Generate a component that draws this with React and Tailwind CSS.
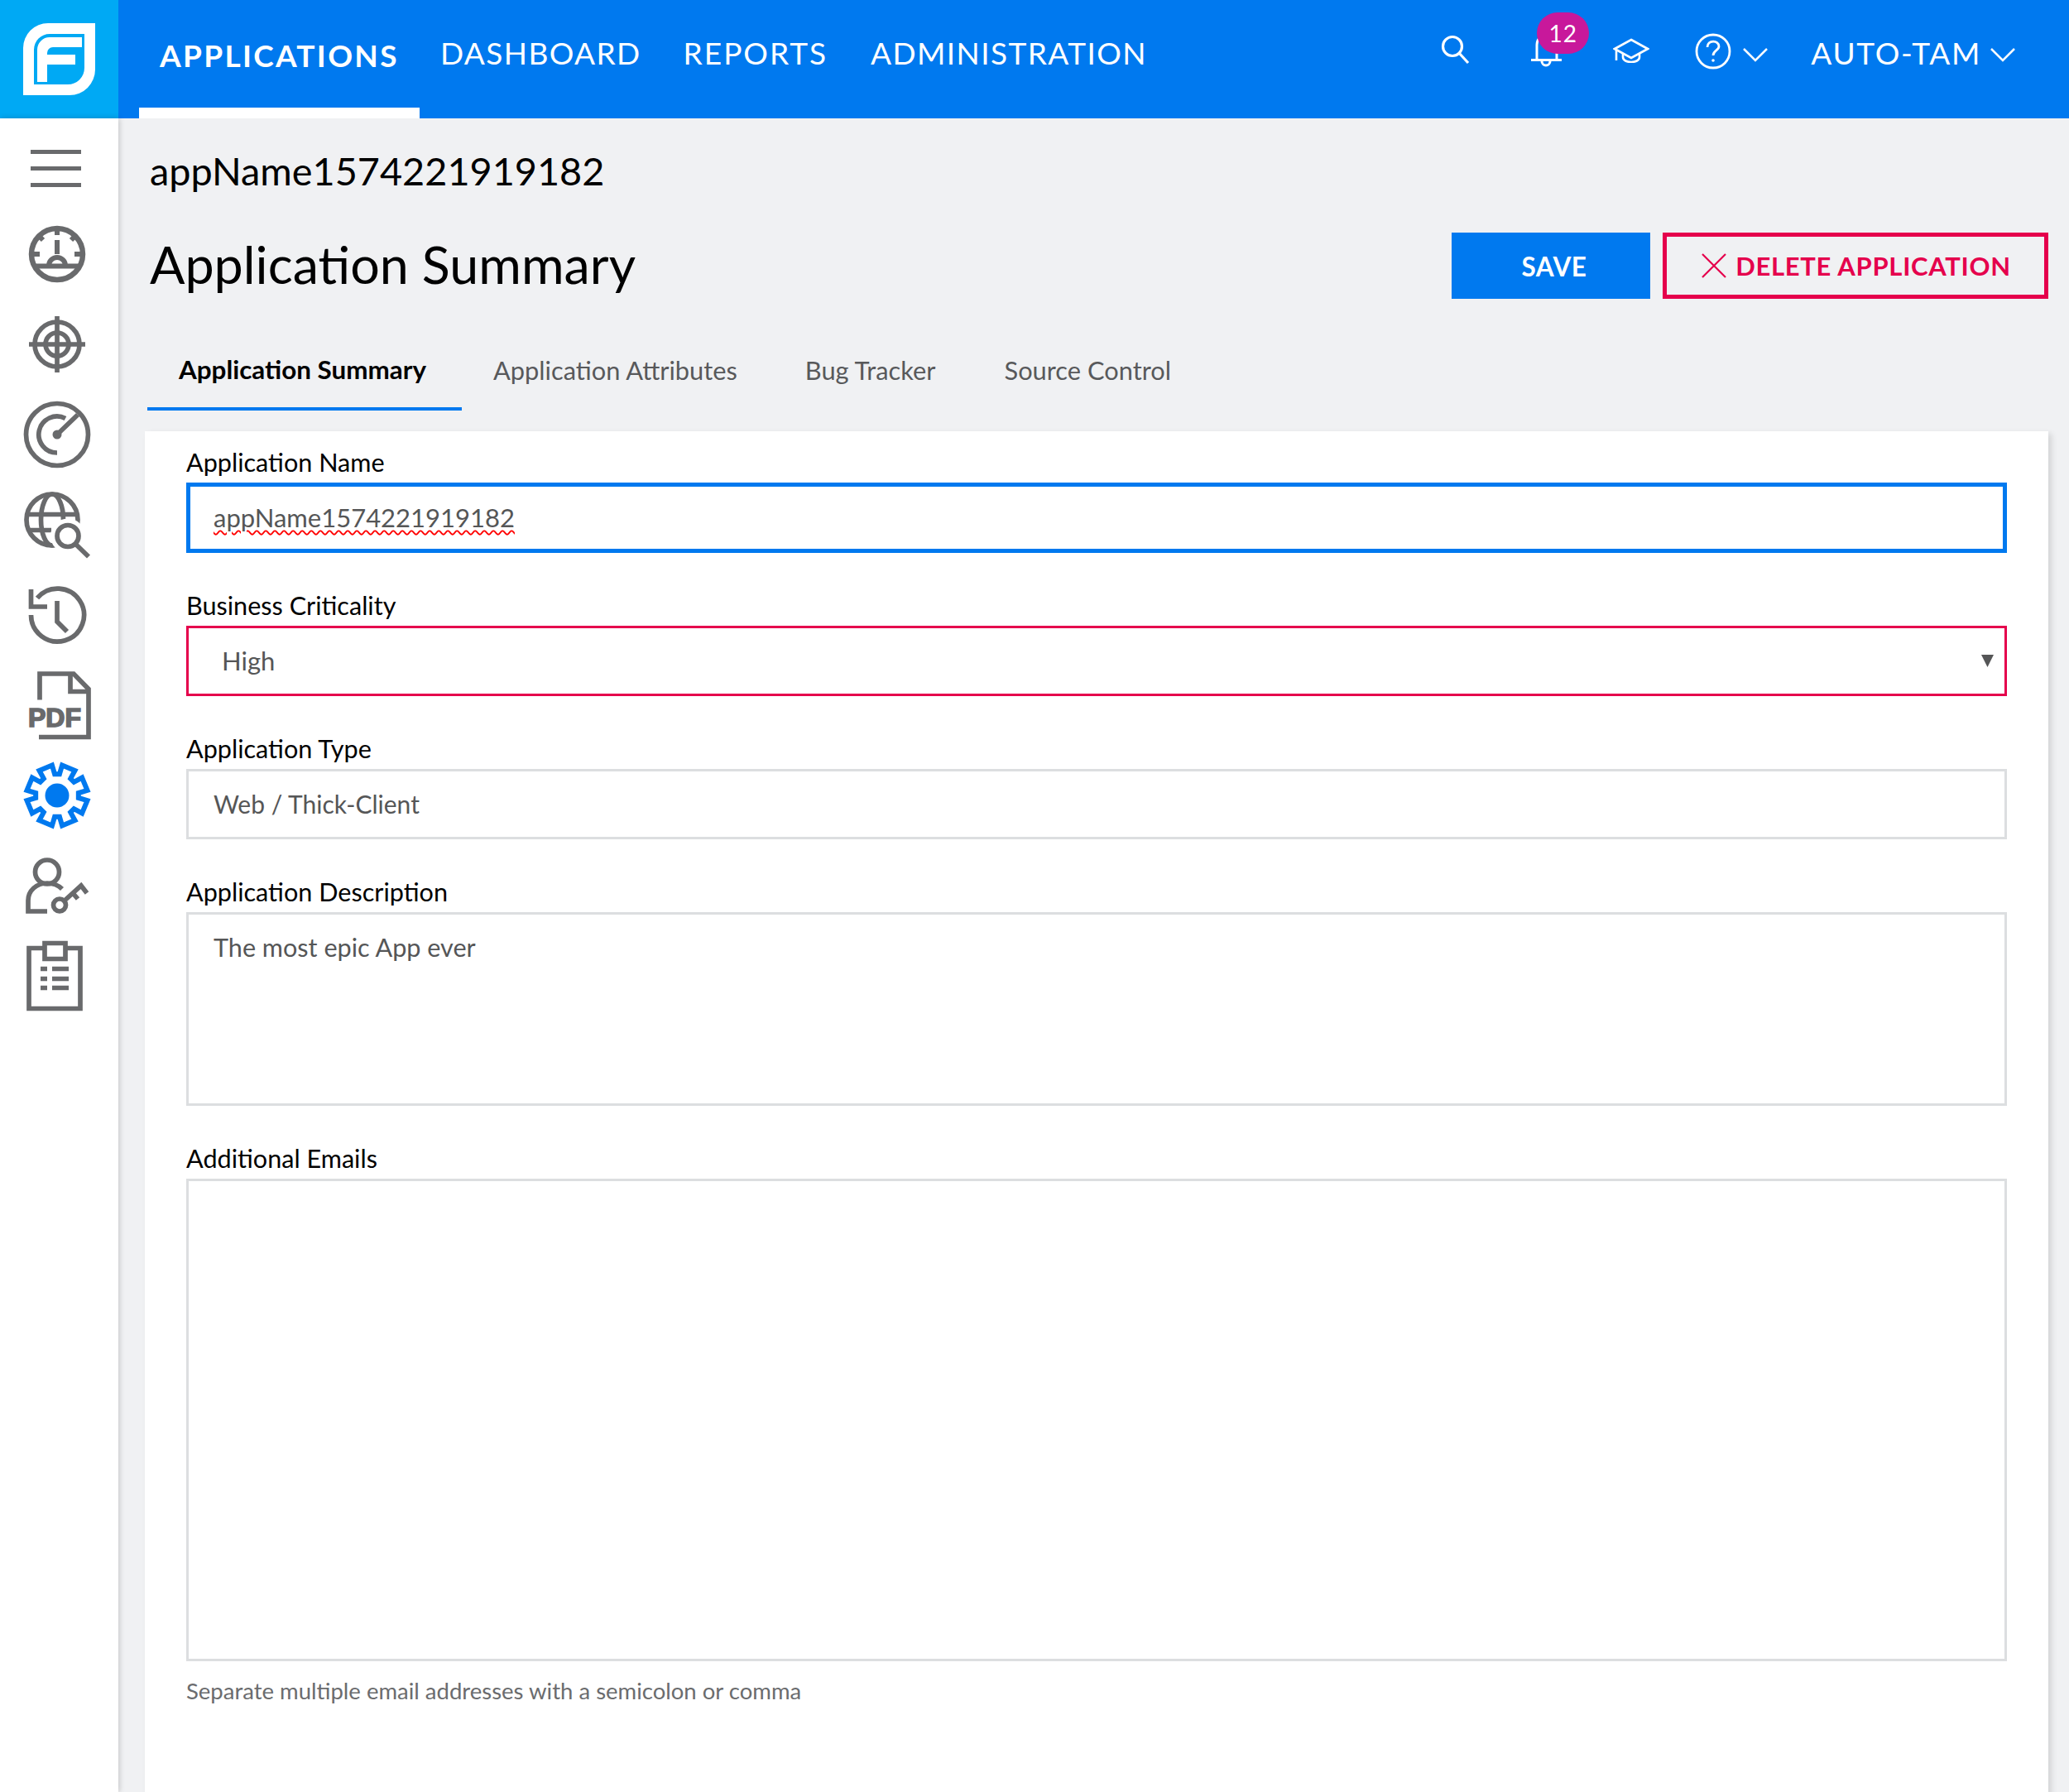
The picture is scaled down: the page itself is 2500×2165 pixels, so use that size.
import React from 'react';

const FONT = "font-['Lato','Noto_Sans',sans-serif]";

const Logo = () => (
  <svg width="143" height="143" viewBox="0 0 143 143">
    <path fill="#fff" fillRule="evenodd" d="M58 28H115V84A31 31 0 0 1 84 115H28V58A30 30 0 0 1 58 28ZM60 41A19 19 0 0 0 41 60V102H82A20 20 0 0 0 102 82V41Z" />
    <path fill="#fff" d="M45 99V60A15 15 0 0 1 60 45H99V57H64A7 7 0 0 0 57 64V66H91V78H57V99Z" />
  </svg>
);

const gearPath = () => {
  const pts = [];
  for (let i = 0; i < 8; i++) {
    const a = 22.5 + i * 45;
    [[a - 16, 26], [a - 13, 37], [a + 13, 37], [a + 16, 26]].forEach(([deg, r]) => {
      const t = ((deg - 90) * Math.PI) / 180;
      pts.push(`${(50 + r * Math.cos(t)).toFixed(2)} ${(50 + r * Math.sin(t)).toFixed(2)}`);
    });
  }
  return `M${pts.join('L')}Z`;
};

const sideIcons = [
  <g key="menu" strokeWidth="5">
    <path d="M18 35.5H79M18 55.5H79M18 75.5H79" />
  </g>,
  <g key="gauge" strokeWidth="6.5">
    <circle cx="50" cy="50" r="31" />
    <path strokeWidth="6" d="M21 64.5H79M50 33V50M40 64A10 10 0 0 1 60 64M50 19V27M21 50H29M71 50H79M28 28L33 33M72 28L67 33" />
  </g>,
  <g key="target" strokeWidth="5.7">
    <circle cx="50" cy="50" r="27" />
    <circle cx="50" cy="50" r="14" />
    <path d="M16 50H84M50 16V84" />
  </g>,
  <g key="radar" strokeWidth="5.7">
    <circle cx="50" cy="50" r="37.5" />
    <path d="M50 72A22 22 0 1 1 60 30.5M50 50L75 26" />
    <circle cx="50" cy="50" r="5.5" fill="#696a6c" stroke="none" />
  </g>,
  <g key="globe" strokeWidth="5.7">
    <circle cx="44" cy="44" r="31" />
    <path d="M15 37.5H73M15 56.5H43" />
    <ellipse cx="44" cy="44" rx="13.5" ry="31" />
    <circle cx="63" cy="63.5" r="21" fill="#fff" stroke="none" />
    <circle cx="63" cy="63.5" r="13" />
    <path d="M72 73L88 88.5" />
  </g>,
  <g key="history" strokeWidth="5.7">
    <path d="M18.5 50A32 32 0 1 0 26 29.5" />
    <path d="M18.5 19V40H38M50 33V58L62 70" />
  </g>,
  <g key="pdf" strokeWidth="5.7">
    <path d="M29 43.5V12H70L88 30.5V88.5H28M66 12V33.5H88" />
    <text x="15" y="75.5" fontFamily="'Liberation Sans',sans-serif" fontWeight="700" fontSize="32" fill="#696a6c" stroke="#696a6c" strokeWidth="1.6" textLength="64" lengthAdjust="spacingAndGlyphs">PDF</text>
  </g>,
  <g key="gear" stroke="#0079ef" strokeWidth="6">
    <path d={gearPath()} />
    <circle cx="50" cy="50" r="14.5" fill="#0079ef" stroke="none" />
  </g>,
  <g key="userkey" strokeWidth="5.7">
    <circle cx="38" cy="33.5" r="14.5" />
    <path d="M38 81H15V68C15 56 25 47 38 47C45 47 51 49 56 54" />
    <circle cx="53" cy="73.5" r="7.5" />
    <path d="M59 68L79 50L86 59M69 59L75 66" />
  </g>,
  <g key="clipboard" strokeWidth="5.7">
    <path d="M16 16.5H78V89.5H16Z" />
    <path fill="#fff" d="M35 10.5H60V29.5H35Z" />
    <path d="M30 41.5H38M44 41.5H64M30 53.5H38M44 53.5H64M30 64.5H38M44 64.5H64" />
  </g>,
];

const Sidebar = () => (
  <aside className="w-[143px] shrink-0 bg-white relative z-10 shadow-[1px_0_7px_rgba(0,0,0,0.2)]">
    {sideIcons.map((icon, i) => (
      <div key={i} className="h-[109px] pl-[19px] flex items-center">
        <svg width="100" height="100" viewBox="0 0 100 100" fill="none" stroke="#696a6c" className="overflow-visible">
          {icon}
        </svg>
      </div>
    ))}
  </aside>
);

const Chevron = () => (
  <svg width="30" height="17" viewBox="0 0 30 17" fill="none" stroke="#fff" strokeWidth="2.5">
    <path d="M1 1L15 15L29 1" />
  </svg>
);

const TopBar = () => (
  <header className="h-[143px] bg-[#0079ef] flex text-white">
    <div className="w-[143px] bg-[#00a9f4]">
      <Logo />
    </div>
    <nav className="flex ml-[25px] text-[37px] tracking-[1.4px]">
      <a className="w-[339px] h-[143px] pl-[25px] border-b-[13px] border-white font-bold flex items-center pt-[3px] tracking-[2.3px]">APPLICATIONS</a>
      <a className="ml-[25px] h-[128px] flex items-center">DASHBOARD</a>
      <a className="ml-[51px] h-[128px] flex items-center tracking-[2px]">REPORTS</a>
      <a className="ml-[52px] h-[128px] flex items-center">ADMINISTRATION</a>
    </nav>
    <div className="ml-auto flex items-start pr-[65px] relative">
      <svg width="36" height="36" viewBox="0 0 36 36" fill="none" stroke="#fff" strokeWidth="3.2" className="mt-[42px]">
        <circle cx="14" cy="14" r="11.5" />
        <path d="M22 22L33 34" />
      </svg>
      <div className="relative ml-[73px] mt-[34px] w-[36px] h-[50px]">
        <svg width="38" height="50" viewBox="0 0 38 50" fill="none" stroke="#fff" strokeWidth="3">
          <path d="M7 38V20A12 12 0 0 1 31 20V38M0 38.5H37" strokeWidth="3" />
          <path d="M13 40A5 5 0 0 0 23 40" />
        </svg>
        <span className="absolute left-[7px] top-[-19px] w-[63px] h-[50px] rounded-full bg-[#c8189b] flex items-center justify-center text-[28px] tracking-[1px] leading-none">12</span>
      </div>
      <svg width="44" height="30" viewBox="0 0 44 30" fill="none" stroke="#fff" strokeWidth="2.6" className="ml-[63px] mt-[46px]">
        <path d="M22 2L42 13L22 24L2 13Z" />
        <path d="M12 18V23C12 31 32 31 32 23V18M4 14V27" />
      </svg>
      <svg width="44" height="44" viewBox="0 0 44 44" fill="none" stroke="#fff" strokeWidth="2.8" className="ml-[55px] mt-[40px]">
        <circle cx="22" cy="22" r="20" />
        <path d="M15 17C15 8 29 8 29 16C29 21 22 21 22 27" />
        <circle cx="22" cy="33" r="1.8" fill="#fff" stroke="none" />
      </svg>
      <div className="ml-[14px] mt-[58px]"><Chevron /></div>
      <span className="ml-[52px] mt-[41px] text-[37px] leading-[46px] tracking-[1.7px]">AUTO-TAM</span>
      <div className="ml-[11px] mt-[58px]"><Chevron /></div>
    </div>
  </header>
);

const Field = ({ label, className = '', boxClass = 'border-[3px] border-[#dcdee0] h-[85px]', children }) => (
  <div className={`mb-[45px] ${className}`}>
    <label className="block h-[43px] text-[30.6px] leading-[37px] text-black">{label}</label>
    <div className={`${boxClass} bg-white text-[31px] text-[#555657]`}>{children}</div>
  </div>
);

export default function App() {
  return (
    <div className={`h-[2165px] overflow-hidden bg-[#f0f1f3] ${FONT}`}>
      <TopBar />
      <div className="flex h-[2022px]">
        <Sidebar />
        <main className="flex-1 min-w-0 pl-[32px] pr-[25px]">
          <h2 className="ml-[6px] mt-[33px] h-[60px] text-[46.8px] leading-[60px] text-black">appName1574221919182</h2>
          <div className="mt-[45px] h-[80px] flex items-center">
            <h1 className="ml-[6px] text-[62.8px] leading-[75px] mb-[5px] text-black">Application Summary</h1>
            <button className="ml-auto w-[240px] h-[80px] pl-[8px] pt-[3px] bg-[#0079ef] text-white text-[31.5px] font-bold tracking-[0.5px]">SAVE</button>
            <button className="ml-[15px] w-[466px] h-[80px] pl-[2px] border-[5px] border-[#e5004c] text-[#e5004c] text-[31px] font-bold tracking-[0.7px] flex items-center justify-center">
              <svg width="30" height="30" viewBox="0 0 30 30" fill="none" stroke="#e5004c" strokeWidth="2.2" className="mr-[11px]">
                <path d="M1 1L29 29M29 1L1 29" />
              </svg>
              DELETE APPLICATION
            </button>
          </div>
          <div className="mt-[39px] ml-[3px] h-[96px] flex text-[30.8px] text-[#58595b]">
            <a className="w-[380px] pl-[38px] pt-[2px] border-b-[4px] border-[#0079ef] text-black text-[31.4px] font-bold flex items-center">Application Summary</a>
            <a className="ml-[38px] flex items-center">Application Attributes</a>
            <a className="ml-[82px] flex items-center">Bug Tracker</a>
            <a className="ml-[83px] flex items-center">Source Control</a>
          </div>
          <section className="mt-[25px] h-[1700px] bg-white px-[50px] pt-[19px] shadow-[4px_3px_7px_rgba(0,0,0,0.12)]">
            <Field label="Application Name" boxClass="border-[5px] border-[#0079ef] h-[85px] flex items-center pl-[28px]">
              <span className="underline decoration-wavy decoration-[#f00] decoration-[2px] underline-offset-[3px]">appName1574221919182</span>
            </Field>
            <Field label="Business Criticality" boxClass="border-[3px] border-[#e5004c] h-[85px] flex items-center pl-[40px] pr-[13px] justify-between">
              <span>High</span>
              <svg width="15" height="15" viewBox="0 0 15 15" fill="#555657"><path d="M0 0H15L7.5 15Z" /></svg>
            </Field>
            <Field label="Application Type" boxClass="border-[3px] border-[#dcdee0] h-[85px] flex items-center pl-[30px]">
              <span className="text-[30px]">Web / Thick-Client</span>
            </Field>
            <Field label="Application Description" boxClass="border-[3px] border-[#dcdee0] h-[234px] pl-[30px] pt-[16px]">
              <span className="text-[30.6px]">The most epic App ever</span>
            </Field>
            <Field label="Additional Emails" className="!mb-[19px]" boxClass="border-[3px] border-[#dcdee0] h-[583px]" />
            <p className="text-[27.5px] leading-[34px] text-[#6b6c6e]">Separate multiple email addresses with a semicolon or comma</p>
          </section>
        </main>
      </div>
    </div>
  );
}
